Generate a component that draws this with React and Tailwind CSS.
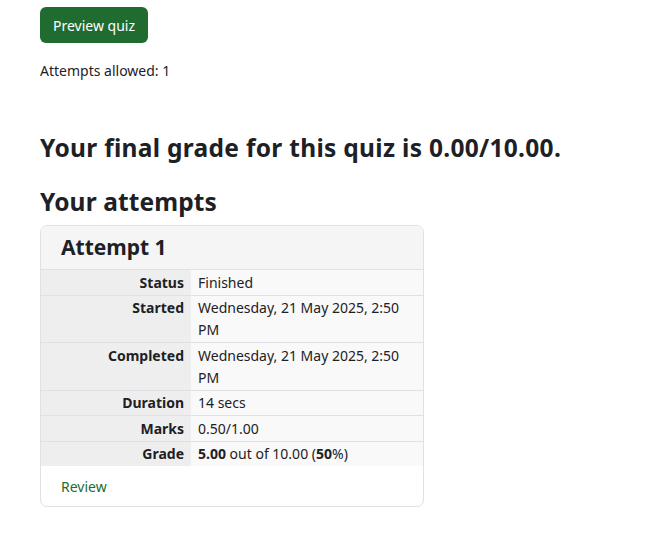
export default function App() {
  const rows = [
    { label: 'Status', value: 'Finished' },
    { label: 'Started', value: 'Wednesday, 21 May 2025, 2:50 PM' },
    { label: 'Completed', value: 'Wednesday, 21 May 2025, 2:50 PM' },
    { label: 'Duration', value: '14 secs' },
    { label: 'Marks', value: '0.50/1.00' },
    {
      label: 'Grade',
      value: (
        <>
          <b>5.00</b> out of 10.00 (<b>50</b>%)
        </>
      ),
    },
  ];

  return (
    <div className="min-h-screen bg-white text-[#1d2125] font-['Noto_Sans',sans-serif] text-[14px] px-[40px] pt-[7px]">
      <button className="h-[36px] px-[13px] rounded-[6px] bg-[#1f6b30] text-white text-[14px]">
        Preview quiz
      </button>

      <p className="mt-[17px] leading-[22px]">Attempts allowed: 1</p>

      <h3 className="mt-[51px] text-[24.5px] font-bold leading-[30px] tracking-[0.3px]">
        Your final grade for this quiz is 0.00/10.00.
      </h3>

      <h3 className="mt-[24px] text-[24.5px] font-bold leading-[30px] tracking-[0.1px]">Your attempts</h3>

      <div className="mt-[8px] w-[384px] border border-[#dee2e6] rounded-[7px] overflow-hidden">
        <div className="bg-[#f5f5f5] h-[43px] px-[20px] flex items-center">
          <h4 className="text-[21px] font-bold">Attempt 1</h4>
        </div>
        <table className="w-full border-collapse">
          <tbody>
            {rows.map((r) => (
              <tr key={r.label} className="border-t border-[#dee2e6] align-top">
                <th className="w-[150px] bg-[#eeeeee] text-right font-bold pr-[7px] pt-[1.5px] pb-[1px] leading-[22px]">
                  {r.label}
                </th>
                <td className="bg-[#f9f9f9] pl-[7px] pr-[14px] pt-[1.5px] pb-[1px] leading-[22px]">{r.value}</td>
              </tr>
            ))}
          </tbody>
        </table>
        <div className="px-[20px] h-[40px] flex items-center">
          <a href="#" className="text-[#1f6b30]">Review</a>
        </div>
      </div>
    </div>
  );
}
